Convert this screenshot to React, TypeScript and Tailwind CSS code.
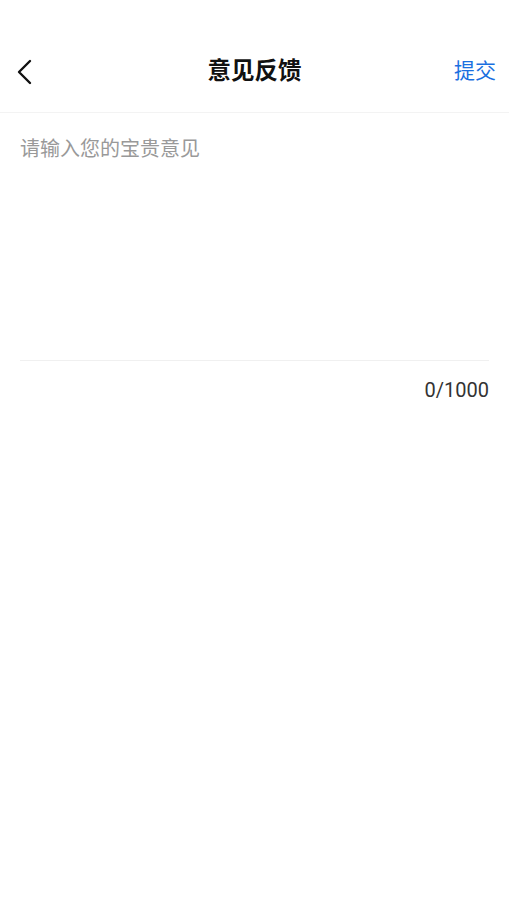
import { useState } from 'react';

const FONT = { fontFamily: 'Roboto, "Noto Sans CJK SC", sans-serif' };

export default function App() {
  const [text, setText] = useState('');

  return (
    <div className="min-h-screen bg-white" style={FONT}>
      <div className="pt-[32px]">
        <div className="relative h-[81px] flex items-center justify-between px-[16px] border-b border-[#f3f3f3]">
          <button className="w-[20px] h-[30px] flex items-center text-black">
            <svg width="16" height="26" viewBox="0 0 16 26" fill="none">
              <path d="M14 2 L3 13 L14 24" stroke="#111" strokeWidth="2.4" strokeLinecap="round" strokeLinejoin="round" />
            </svg>
          </button>
          <h1 className="absolute left-1/2 -translate-x-1/2 text-[23.5px] font-bold text-[#111]">意见反馈</h1>
          <button className="text-[21px] text-[#1a6fe0] mr-[-3px]">提交</button>
        </div>
      </div>

      <div className="px-[20px]">
        <textarea
          value={text}
          onChange={(e) => setText(e.target.value.slice(0, 1000))}
          placeholder="请输入您的宝贵意见"
          className="block w-full h-[248px] pt-[21px] resize-none outline-none text-[20px] leading-[30px] text-[#333] placeholder-[#999] border-b border-[#f0f0f0]"
        />
        <div className="mt-[15px] text-right text-[20px] leading-[28px] text-[#333]">
          {text.length}/1000
        </div>
      </div>
    </div>
  );
}
